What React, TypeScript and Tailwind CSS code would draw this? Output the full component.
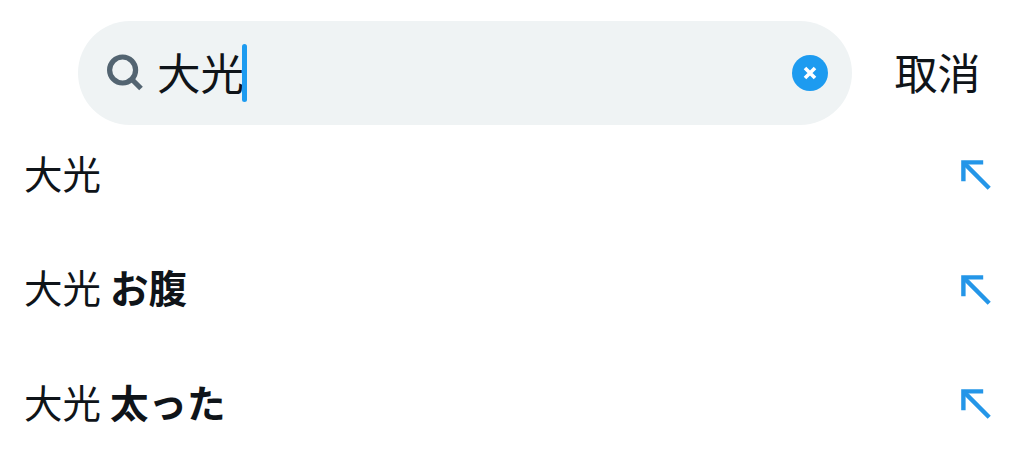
const suggestions = [
  { query: '大光', rest: '' },
  { query: '大光', rest: 'お腹' },
  { query: '大光', rest: '太った' },
]

function SearchIcon() {
  return (
    <svg className="size-10 shrink-0" viewBox="0 0 40 40" fill="none" stroke="#536471" strokeWidth="5.2">
      <circle cx="17.6" cy="17" r="13" />
      <path d="M26.5 26L36 35.5" />
    </svg>
  )
}

function ArrowIcon() {
  return (
    <svg className="size-8 shrink-0" viewBox="0 0 32 32" fill="none" stroke="#2496e8" strokeWidth="4.4">
      <path d="M3.4 22.2V3.4H23.2" />
      <path d="M3.4 3.4L29.2 29.2" />
    </svg>
  )
}

export default function App() {
  return (
    <div className="h-[472px] w-[1024px] overflow-hidden bg-white font-['Noto_Sans_CJK_JP',sans-serif] text-[#0f1419]">
      {/* Search bar */}
      <header className="flex items-center pt-[21px] pl-[78px]">
        <div className="flex h-[104px] w-[774px] items-center rounded-full bg-[#eff3f4] pr-6 pl-[27px]">
          <SearchIcon />
          <span className="-mr-[2px] ml-3 pb-[3px] text-[43.5px] leading-none">大光</span>
          <span className="mb-px h-[58px] w-[5px] rounded-full bg-[#1d9bf0]" />
          <button type="button" aria-label="清除" className="ml-auto">
            <svg className="size-9" viewBox="0 0 36 36" fill="none">
              <circle cx="18" cy="18" r="18" fill="#1d9bf0" />
              <path d="M13 13L23 23M23 13L13 23" stroke="#fff" strokeWidth="3.6" />
            </svg>
          </button>
        </div>
        <button type="button" className="ml-[42.5px] pb-[3px] text-[43px] leading-none">
          取消
        </button>
      </header>

      {/* Suggestions */}
      <ul className="-mt-[7px]">
        {suggestions.map((item) => (
          <li key={item.rest} className="flex h-[114.5px] items-center justify-between pr-8 pl-6">
            <span className="pb-[7px] text-[38.5px] leading-none">
              {item.query}
              {item.rest && <b className="ml-[9px] font-bold">{item.rest}</b>}
            </span>
            <ArrowIcon />
          </li>
        ))}
      </ul>
    </div>
  )
}
